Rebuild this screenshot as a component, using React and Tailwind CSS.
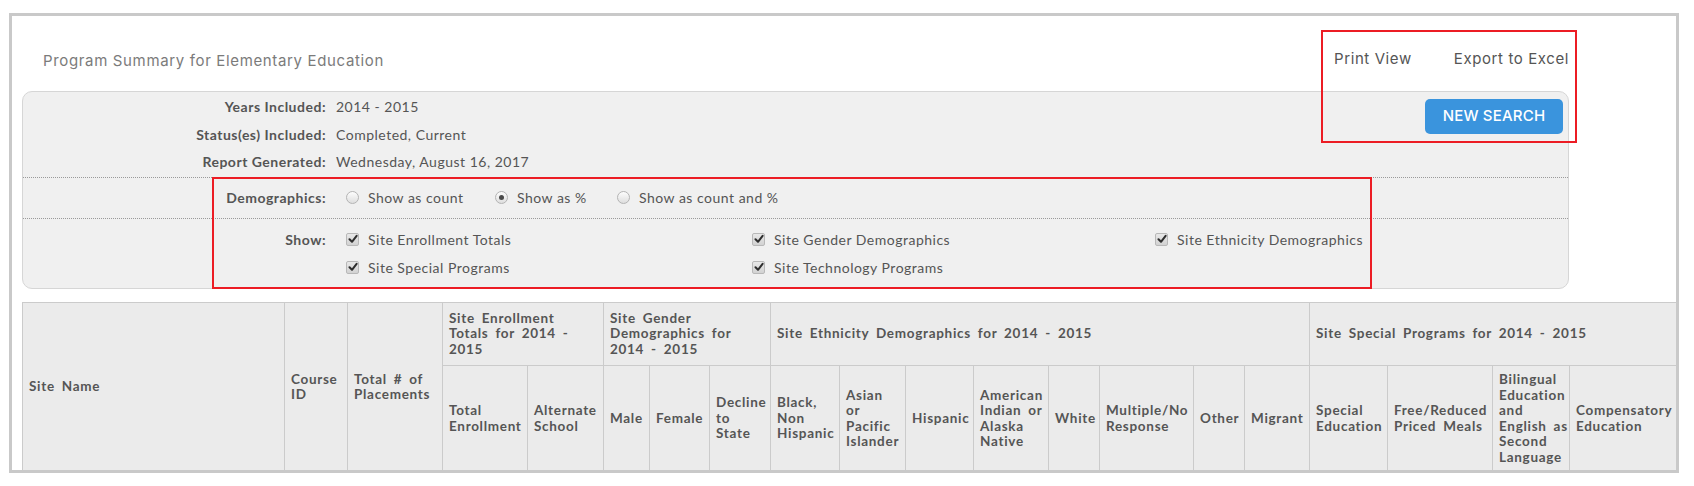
import React from "react";

const Radio = ({ checked }) => (
  <span className="relative inline-block w-[13px] h-[13px] rounded-full border border-[#b4b4b4] bg-gradient-to-b from-[#fdfdfd] to-[#dedede] shrink-0">
    {checked && (
      <span className="absolute left-[3px] top-[3px] w-[5px] h-[5px] rounded-full bg-[#4a4a4a]"></span>
    )}
  </span>
);

const Check = () => (
  <span className="relative inline-flex items-center justify-center w-[13px] h-[13px] rounded-[2px] border border-[#b8b8b8] bg-gradient-to-b from-[#e8e8e8] to-[#d2d2d2] shrink-0">
    <svg width="10" height="10" viewBox="0 0 10 10">
      <path d="M1.5 5.2 L4 7.8 L8.6 1.8" fill="none" stroke="#2e2e2e" strokeWidth="2" strokeLinecap="round" strokeLinejoin="round" />
    </svg>
  </span>
);

const InfoRow = ({ label, value }) => (
  <div className="flex items-center h-[27.5px]">
    <span className="w-[303px] text-right font-bold text-[#555]">{label}</span>
    <span className="ml-[10px] text-[#555]">{value}</span>
  </div>
);

const CheckItem = ({ text }) => (
  <div className="flex items-center h-[28px]">
    <Check />
    <span className="ml-[9px]">{text}</span>
  </div>
);

// header cell; lines are given as an array so the breaks match the report
const Th = ({ lines, ...rest }) => (
  <th
    {...rest}
    className="border border-[#cbcbcb] bg-[#ebebeb] text-left align-middle pl-[6px] pr-[4px] py-[6px] font-bold text-[13.5px] leading-[15.5px] tracking-[0.7px] [word-spacing:3px] whitespace-nowrap text-[#555]"
  >
    {lines.map((l, i) => (
      <React.Fragment key={i}>
        {i > 0 && <br />}
        {l}
      </React.Fragment>
    ))}
  </th>
);

const colWidths = [262, 63, 95, 85, 76, 46, 60, 61, 69, 66, 68, 75, 51, 94, 51, 65, 78, 105, 77, 120];

const subHeaders = [
  ["Total", "Enrollment"],
  ["Alternate", "School"],
  ["Male"],
  ["Female"],
  ["Decline", "to", "State"],
  ["Black,", "Non", "Hispanic"],
  ["Asian", "or", "Pacific", "Islander"],
  ["Hispanic"],
  ["American", "Indian or", "Alaska", "Native"],
  ["White"],
  ["Multiple/No", "Response"],
  ["Other"],
  ["Migrant"],
  ["Special", "Education"],
  ["Free/Reduced", "Priced Meals"],
  ["Bilingual", "Education", "and", "English as", "Second", "Language"],
  ["Compensatory", "Education"],
];

export default function App() {
  return (
    <div className="relative w-[1694px] h-[486px] bg-white pt-[13px] pl-[9px] font-['Lato',sans-serif]">
      <div className="w-[1670px] h-[460px] border-[3px] border-[#c9c9c9] overflow-hidden">
        {/* title row */}
        <div className="flex justify-between items-start h-[75px] pl-[31px] pr-[107px]">
          <h1 className="mt-[35px] font-['Inter',sans-serif] text-[15px] leading-[20px] tracking-[0.65px] text-[#7b7b7b]">
            Program Summary for Elementary Education
          </h1>
          <div className="flex gap-[42px] mt-[33px] font-['Inter',sans-serif] text-[15px] leading-[20px] tracking-[0.6px] text-[#555]">
            <a href="#">Print View</a>
            <a href="#">Export to Excel</a>
          </div>
        </div>

        {/* filter panel */}
        <div className="ml-[10px] w-[1547px] h-[198px] rounded-[10px] border border-[#d6d6d6] bg-[#f0f0f0] text-[14px] tracking-[0.5px] text-[#555]">
          <div className="flex justify-between h-[85px] pt-[1px] pr-[5px]">
            <div>
              <InfoRow label="Years Included:" value="2014 - 2015" />
              <InfoRow label="Status(es) Included:" value="Completed, Current" />
              <InfoRow label="Report Generated:" value="Wednesday, August 16, 2017" />
            </div>
            <button className="mt-[6px] w-[138px] h-[35px] rounded-[5px] bg-[#3a94dd] font-['Inter',sans-serif] font-medium text-[15px] tracking-[0.2px] text-white">
              NEW SEARCH
            </button>
          </div>
          <div className="border-t border-dotted border-[#9a9a9a]"></div>
          <div className="flex items-center h-[40px] pb-[2px]">
            <span className="w-[303px] text-right font-bold">Demographics:</span>
            <div className="flex items-center ml-[20px]">
              <label className="flex items-center w-[149px]">
                <Radio />
                <span className="ml-[9px]">Show as count</span>
              </label>
              <label className="flex items-center w-[122px]">
                <Radio checked />
                <span className="ml-[9px]">Show as %</span>
              </label>
              <label className="flex items-center">
                <Radio />
                <span className="ml-[9px]">Show as count and %</span>
              </label>
            </div>
          </div>
          <div className="border-t border-dotted border-[#9a9a9a]"></div>
          <div className="flex pt-[6px]">
            <span className="w-[303px] h-[28px] flex items-center justify-end font-bold">Show:</span>
            <div className="ml-[20px] grid grid-cols-[406px_403px_auto]">
              <CheckItem text="Site Enrollment Totals" />
              <CheckItem text="Site Gender Demographics" />
              <CheckItem text="Site Ethnicity Demographics" />
              <CheckItem text="Site Special Programs" />
              <CheckItem text="Site Technology Programs" />
            </div>
          </div>
        </div>

        {/* report table */}
        <table className="mt-[13px] ml-[10px] table-fixed border-collapse border-t border-l border-t-[#9a9a9a] border-l-[#9a9a9a] w-[1667px]">
          <colgroup>
            {colWidths.map((w, i) => (
              <col key={i} style={{ width: w }} />
            ))}
          </colgroup>
          <thead>
            <tr className="h-[63px]">
              <Th rowSpan={2} lines={["Site Name"]} />
              <Th rowSpan={2} lines={["Course", "ID"]} />
              <Th rowSpan={2} lines={["Total # of", "Placements"]} />
              <Th colSpan={2} lines={["Site Enrollment", "Totals for 2014 -", "2015"]} />
              <Th colSpan={3} lines={["Site Gender", "Demographics for", "2014 - 2015"]} />
              <Th colSpan={8} lines={["Site Ethnicity Demographics for 2014 - 2015"]} />
              <Th colSpan={4} lines={["Site Special Programs for 2014 - 2015"]} />
            </tr>
            <tr className="h-[105px]">
              {subHeaders.map((lines, i) => (
                <Th key={i} lines={lines} />
              ))}
            </tr>
          </thead>
        </table>
      </div>

      {/* annotation boxes */}
      <div className="absolute left-[1321px] top-[30px] w-[256px] h-[113px] border-2 border-[#ec1c24]"></div>
      <div className="absolute left-[212px] top-[177px] w-[1160px] h-[112px] border-2 border-[#ec1c24]"></div>
    </div>
  );
}
